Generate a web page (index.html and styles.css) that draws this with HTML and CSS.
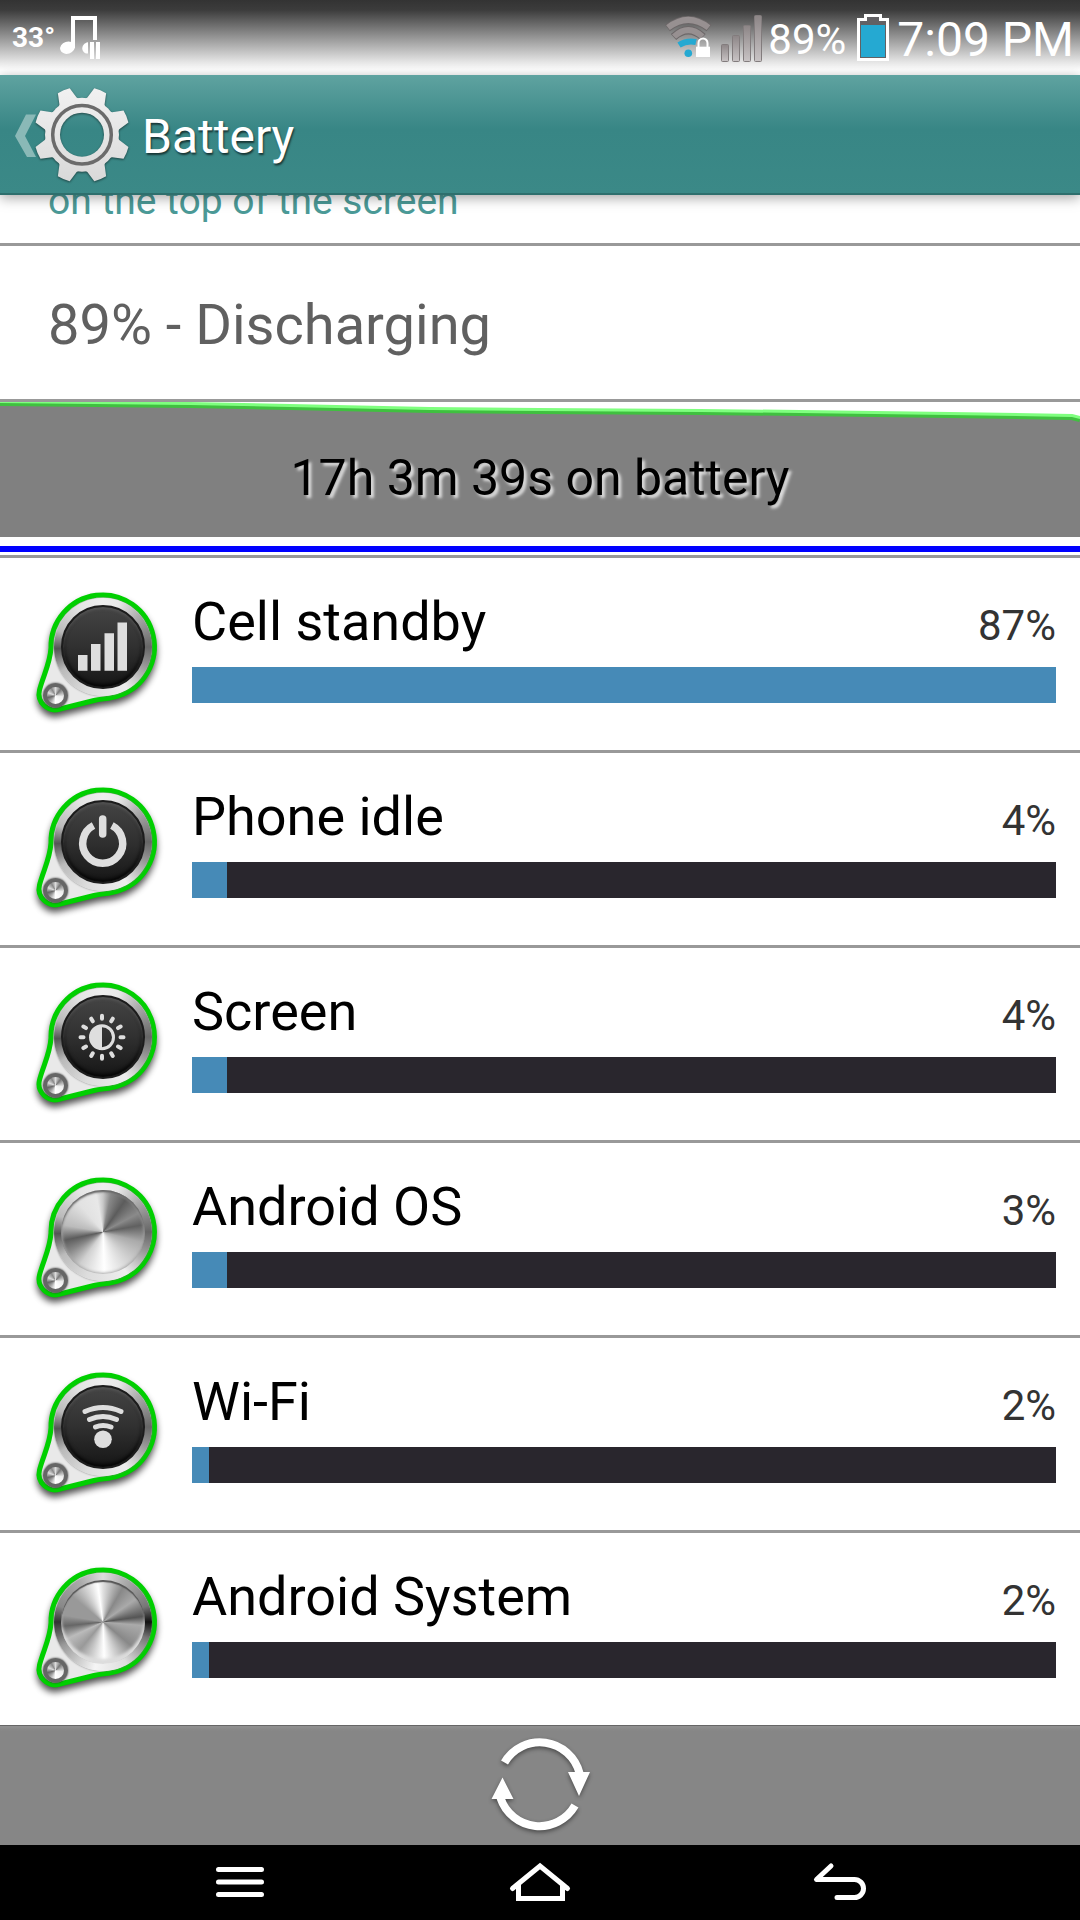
FILE: index.html
```html
<!DOCTYPE html>
<html lang="en">
<head>
  <meta charset="UTF-8">
  <meta name="viewport" content="width=device-width, initial-scale=1.0">
  <title>Battery</title>
  <link rel="stylesheet" href="styles.css">
</head>
<body>

  <!-- shared icon shapes -->
  <svg class="defs" width="0" height="0" aria-hidden="true">
    <defs>
      <filter id="soft" x="-20%" y="-20%" width="140%" height="150%">
        <feGaussianBlur stdDeviation="3.5"/>
      </filter>
      <linearGradient id="gear-fill" x1="0" y1="0" x2="0" y2="1">
        <stop offset="0" stop-color="#f2f2f2"/>
        <stop offset="1" stop-color="#d8d8d8"/>
      </linearGradient>
      <linearGradient id="bar-fill" x1="0" y1="0" x2="0" y2="1">
        <stop offset="0" stop-color="#8c8586"/>
        <stop offset="1" stop-color="#c9c4c5"/>
      </linearGradient>
      <path id="drop" d="M27 66 A51.7 51.7 0 1 1 95 113.7 C86 117 78 116.500 70 118.500 L36 127 A16 16 0 0 1 15.500 108 C19 94 26 82 27 66Z"/>
      <symbol id="shell" viewBox="0 0 144 144">
        <use href="#drop" y="5" fill="#000" stroke="#000" stroke-width="4" opacity=".7" filter="url(#soft)"/>
        <use href="#drop" fill="#e9e9e9" stroke="#00d000" stroke-width="5"/>
      </symbol>
      <path id="tooth" d="M-11 -34 L-9.300 -36.500 L-6.400 -47.600 Q0 -48.600 6.400 -47.600 L9.300 -36.500 L11 -34Z"/>
    </defs>
  </svg>

  <header class="status-bar">
    <span class="temp">33°</span>
    <svg class="icon-music" width="48" height="75" viewBox="0 0 48 75" fill="#fff">
      <path d="M15 48V16H41V40H37V20H19V48Z"/>
      <ellipse cx="11.500" cy="47.700" rx="7.500" ry="6" transform="rotate(-18 11.500 47.700)"/>
      <path d="M32 42.300C28 43 26.300 46 26.300 48.500C26.300 51.500 29 54 32 53.500Z"/>
      <path d="M34 42H38V59H34ZM40 42H44V59H40Z"/>
    </svg>
    <span class="spacer"></span>
    <svg width="52" height="75" viewBox="0 0 52 75" fill="none">
      <g stroke="#6c6768" stroke-width="8">
        <path d="M5.500 28Q26.300 12 47 28"/>
        <path d="M11.500 37Q26.300 23.500 41 37"/>
      </g>
      <g stroke="#979091" stroke-width="6">
        <path d="M6 27.600Q26.300 12 46.500 27.600"/>
        <path d="M12 36.600Q26.300 23.500 40.500 36.600"/>
      </g>
      <path d="M17 45Q25 40 34 42" stroke="#25a9d2" stroke-width="6"/>
      <circle cx="26.300" cy="53.300" r="3.800" fill="#25a9d2"/>
      <path d="M34 46.700H48V57H34Z" fill="#fff"/>
      <path d="M36.500 47V43a4.500 4.500 0 0 1 9 0V47" stroke="#fff" stroke-width="2"/>
    </svg>
    <svg width="48" height="75" viewBox="0 0 48 75" fill="url(#bar-fill)" stroke="#827c7d">
      <rect x="7.500" y="44.500" width="7" height="17" rx="1"/>
      <rect x="18.500" y="35.500" width="7" height="26" rx="1"/>
      <rect x="29.500" y="25.500" width="7" height="36" rx="1"/>
      <rect x="40.500" y="15.500" width="7" height="46" rx="1"/>
    </svg>
    <span class="level">89%</span>
    <svg class="icon-battery" width="32" height="75" viewBox="0 0 32 75">
      <path d="M0 18H7V14H25V18H32V61H0Z" fill="#fff"/>
      <path d="M3 21H10V17H22V21H29V58H3Z" fill="#626164"/>
      <path d="M4 25H28V57H4Z" fill="#25a9d2"/>
    </svg>
    <time class="clock">7:09 PM</time>
  </header>

  <nav class="action-bar">
    <a href="#" class="up" aria-label="Back to settings">
      <svg width="120" height="120" viewBox="0 0 120 120">
        <path d="M14 39.500H24L13 61L24 82H15L3 61Z" fill="#8ab9b7"/>
        <mask id="gear-mask">
          <g transform="translate(70 59.700)" fill="#fff">
            <circle r="37"/>
            <use href="#tooth" transform="rotate(22.500)"/>
            <use href="#tooth" transform="rotate(67.500)"/>
            <use href="#tooth" transform="rotate(112.500)"/>
            <use href="#tooth" transform="rotate(157.500)"/>
            <use href="#tooth" transform="rotate(202.500)"/>
            <use href="#tooth" transform="rotate(247.500)"/>
            <use href="#tooth" transform="rotate(292.500)"/>
            <use href="#tooth" transform="rotate(337.500)"/>
            <circle r="22" fill="#000"/>
          </g>
        </mask>
        <g class="gear">
          <rect x="20" y="10" width="100" height="100" fill="url(#gear-fill)" mask="url(#gear-mask)"/>
        </g>
        <circle cx="70" cy="59.700" r="29.300" fill="none" stroke="#6b6b6b" stroke-width="3.500"/>
      </svg>
    </a>
    <h1 class="title">Battery</h1>
  </nav>

  <main>
    <section class="hint">
      <p>on the top of the screen</p>
    </section>

    <section class="state">89% - Discharging</section>

    <section class="history">
      <div class="chart">
        <svg width="100%" height="135" viewBox="0 0 1080 135" preserveAspectRatio="none">
          <path d="M0 1L190 3L290 5L430 8L540 9L700 10L800 11L950 13L1072 15L1080 17V135H0Z" fill="#808080"/>
          <path d="M0 1L190 3L290 5L430 8L540 9L700 10L800 11L950 13L1072 15L1080 17" fill="none" stroke="#0f0" stroke-opacity=".5" stroke-width="6"/>
        </svg>
        <span class="elapsed">17h 3m 39s on battery</span>
      </div>
      <div class="blue-line"></div>
    </section>

    <ul class="usage">
      <li class="row">
        <div class="app-icon">
          <svg width="144" height="144"><use href="#shell"/></svg>
          <i class="ring"></i><i class="cap dark"></i><i class="screw"></i>
          <svg class="glyph" width="144" height="144" fill="#dedede">
            <path d="M54 73h9.500v15.700H54ZM67 62h9.500v26.700H67ZM80.500 51.300h9.500v37.400h-9.500ZM93.500 40.500h9.500v48.200h-9.500Z"/>
          </svg>
        </div>
        <div class="info">
          <div class="label"><span class="name">Cell standby</span><span class="percent">87%</span></div>
          <div class="bar"><div class="fill" style="width: 100%"></div></div>
        </div>
      </li>
      <li class="row">
        <div class="app-icon">
          <svg width="144" height="144"><use href="#shell"/></svg>
          <i class="ring"></i><i class="cap dark"></i><i class="screw"></i>
          <svg class="glyph" width="144" height="144" fill="none" stroke="#dedede" stroke-width="7.500">
            <path d="M69.500 48.500A20 20 0 1 0 87.900 48.500"/>
            <path d="M78.700 42V57" stroke-linecap="round"/>
          </svg>
        </div>
        <div class="info">
          <div class="label"><span class="name">Phone idle</span><span class="percent">4%</span></div>
          <div class="bar"><div class="fill" style="width: 4%"></div></div>
        </div>
      </li>
      <li class="row">
        <div class="app-icon">
          <svg width="144" height="144"><use href="#shell"/></svg>
          <i class="ring"></i><i class="cap dark"></i><i class="screw"></i>
          <svg class="glyph" width="144" height="144">
            <g transform="translate(78 65.300)" fill="none" stroke="#dedede">
              <circle r="11.500" stroke-width="3"/>
              <path d="M0 -12A12 12 0 0 0 0 12Z" fill="#dedede" stroke="none"/>
              <g stroke-width="4" stroke-linecap="round">
                <path d="M0 -18.500V-21.500M0 18.500V21.500M18.500 0H21.500M-18.500 0H-21.500"/>
                <path d="M0 -18.500V-21.500M0 18.500V21.500M18.500 0H21.500M-18.500 0H-21.500" transform="rotate(30)"/>
                <path d="M0 -18.500V-21.500M0 18.500V21.500M18.500 0H21.500M-18.500 0H-21.500" transform="rotate(60)"/>
              </g>
            </g>
          </svg>
        </div>
        <div class="info">
          <div class="label"><span class="name">Screen</span><span class="percent">4%</span></div>
          <div class="bar"><div class="fill" style="width: 4%"></div></div>
        </div>
      </li>
      <li class="row">
        <div class="app-icon">
          <svg width="144" height="144"><use href="#shell"/></svg>
          <i class="ring"></i><i class="cap steel"></i><i class="screw"></i>
        </div>
        <div class="info">
          <div class="label"><span class="name">Android OS</span><span class="percent">3%</span></div>
          <div class="bar"><div class="fill" style="width: 4%"></div></div>
        </div>
      </li>
      <li class="row">
        <div class="app-icon">
          <svg width="144" height="144"><use href="#shell"/></svg>
          <i class="ring"></i><i class="cap dark"></i><i class="screw"></i>
          <svg class="glyph" width="144" height="144" fill="none" stroke="#dedede" stroke-width="5" stroke-linecap="round">
            <path d="M61 49.500Q79 41.500 97 49.500"/>
            <path d="M65.500 57.500Q79 51.500 92.500 57.500"/>
            <path d="M71.500 65Q79 62 87 65"/>
            <circle cx="79" cy="77.300" r="8.800" fill="#dedede" stroke="none"/>
          </svg>
        </div>
        <div class="info">
          <div class="label"><span class="name">Wi-Fi</span><span class="percent">2%</span></div>
          <div class="bar"><div class="fill" style="width: 2%"></div></div>
        </div>
      </li>
      <li class="row">
        <div class="app-icon">
          <svg width="144" height="144"><use href="#shell"/></svg>
          <i class="ring worn"></i><i class="cap steel worn"></i><i class="screw"></i>
        </div>
        <div class="info">
          <div class="label"><span class="name">Android System</span><span class="percent">2%</span></div>
          <div class="bar"><div class="fill" style="width: 2%"></div></div>
        </div>
      </li>
    </ul>
  </main>

  <div class="tool-bar">
    <button class="refresh" aria-label="Refresh">
      <svg width="96" height="96" viewBox="0 0 96 96">
        <g fill="none" stroke="#fff" stroke-width="8">
          <path d="M12.500 24.500A41 41 0 0 1 87.500 35"/>
          <path d="M83 67.500A41 41 0 0 1 8.500 60"/>
        </g>
        <path d="M76 34H98L87 58ZM-0.500 61H21.500L10.500 39.500Z" fill="#fff"/>
      </svg>
    </button>
  </div>

  <footer class="nav-bar">
    <button aria-label="Menu">
      <svg width="72" height="75" viewBox="0 0 72 75"><path d="M14.500 24.500H57.500M14.500 37H57.500M14.500 49.500H57.500"/></svg>
    </button>
    <button aria-label="Home">
      <svg width="72" height="75" viewBox="0 0 72 75"><path d="M8.500 43.500L36 21L63.500 43.500M14.500 40V53.500H58.500V40" stroke-linejoin="miter"/></svg>
    </button>
    <button aria-label="Back">
      <svg width="72" height="75" viewBox="0 0 72 75"><path d="M27 21L12.500 34.500H50.500a9 9 0 0 1 0 18H33"/></svg>
    </button>
  </footer>

</body>
</html>
```
FILE: styles.css
```css
* {
  box-sizing: border-box;
}
body {
  margin: 0;
  min-height: 100vh;
  display: flex;
  flex-direction: column;
  background: #fff;
  color: #000;
  font-family: Roboto, "Noto Sans", sans-serif;
}
svg {
  display: block;
  flex-shrink: 0;
}
.defs {
  position: absolute;
}
button {
  border: none;
  background: none;
  padding: 0;
  cursor: pointer;
}
h1, p, ul {
  margin: 0;
  padding: 0;
}

/* status bar */
.status-bar {
  display: flex;
  height: 75px;
  padding: 0 6px 0 12px;
  background: linear-gradient(#333 0, #3c3c3c 10px, #fff 70px);
  color: #fff;
  line-height: 79px;
}
.temp {
  width: 44px;
  font-weight: bold;
  font-size: 28px;
  line-height: 75px;
  white-space: nowrap;
}
.spacer {
  flex: 1;
}
.level {
  margin-left: 6px;
  font-size: 42px;
}
.icon-battery {
  margin: 0 8px 0 11px;
}
.clock {
  font-size: 48px;
}

/* action bar */
.action-bar {
  position: relative;
  z-index: 1;
  display: flex;
  align-items: center;
  height: 120px;
  padding: 0 12px;
  background: linear-gradient(#5fa3a0, #388685 45%, #3b8987);
  box-shadow: inset 0 -2px #2e6f6d, 0 3px 12px rgba(0, 0, 0, 0.35);
}
.up {
  margin-right: 10px;
}
.gear {
  filter: drop-shadow(0 1px 1px rgba(0, 0, 0, 0.5));
}
.title {
  color: #fff;
  font-size: 48px;
  font-weight: normal;
  line-height: 56px;
  padding-top: 4px;
  text-shadow: 1px 2px 2px rgba(0, 0, 0, 0.6);
}

/* top sections */
main {
  flex: 1;
}
/* scrolled partly under the action bar */
.hint {
  display: flex;
  align-items: flex-end;
  height: 51px;
  padding: 0 48px 18px;
  border-bottom: 3px solid #999;
  color: #4b9a97;
  font-size: 39px;
  line-height: 48px;
}
.state {
  display: flex;
  align-items: center;
  height: 156px;
  padding: 4px 48px 0;
  border-bottom: 3px solid #999;
  color: #606060;
  font-size: 56px;
}
.history {
  height: 156px;
  border-bottom: 3px solid #999;
}
.chart {
  position: relative;
}
.elapsed {
  position: absolute;
  inset: 0;
  padding-top: 16px;
  text-align: center;
  font-size: 50px;
  line-height: 120px;
  text-shadow: 3px 3px 3px #ddd;
}
.blue-line {
  height: 6px;
  margin-top: 9px;
  background: #00f;
}

/* usage list */
.usage {
  list-style: none;
}
.row {
  display: flex;
  align-items: flex-start;
  gap: 24px;
  padding: 24px;
  border-bottom: 3px solid #999;
}
.row:last-child {
  border-bottom: none;
}
.info {
  flex: 1;
  padding-top: 8px;
}
.label {
  display: flex;
  justify-content: space-between;
  align-items: baseline;
  line-height: 64px;
}
.name {
  font-size: 54px;
}
.percent {
  color: #333;
  font-size: 42px;
}
.bar {
  height: 36px;
  margin-top: 9px;
  background: #29262d;
}
.fill {
  height: 100%;
  background: #468ab7;
}

/* metal badge, layers stacked over the green shell */
.app-icon {
  position: relative;
  width: 144px;
  height: 144px;
}
.app-icon i,
.glyph {
  position: absolute;
  border-radius: 50%;
}
.glyph {
  top: 0;
  left: 0;
}
.app-icon .ring {
  left: 30px;
  top: 16px;
  width: 98px;
  height: 98px;
  background: conic-gradient(#eee 0, #e8e8e8 20deg, #aaa 50deg, #666 90deg, #999 115deg, #eee 150deg, #ddd 200deg, #bbb 240deg, #555 268deg, #bbb 290deg, #e5e5e5 330deg, #eee);
  box-shadow: 0 0 2px #777;
}
.app-icon .ring.worn {
  background: conic-gradient(#ddd 0, #aaa 30deg, #777 70deg, #111 90deg, #777 110deg, #ddd 150deg, #f5f5f5 190deg, #999 240deg, #333 270deg, #888 290deg, #aaa 330deg, #ddd);
}
.app-icon .cap {
  left: 37px;
  top: 23px;
  width: 84px;
  height: 84px;
}
.cap.dark {
  background: linear-gradient(#444, #303030 50%, #161616);
  border: 2px solid #1c1c1c;
  box-shadow: inset 0 2px 3px #555, inset 0 -2px 4px #000;
}
.cap.steel {
  background: conic-gradient(#c8c8c8 0, #888 12deg, #5c5c5c 35deg, #8a8a8a 62deg, #606060 80deg, #aaa 105deg, #d4d4d4 140deg, #fff 178deg, #d0d0d0 215deg, #888 240deg, #5c5c5c 258deg, #bbb 280deg, #e2e2e2 320deg, #e8e8e8 350deg, #c8c8c8);
  box-shadow: inset 0 2px 2px #666, inset 0 0 3px 1px #aaa;
}
.cap.steel.worn {
  background: conic-gradient(#e0e0e0 0, #888 30deg, #aaa 55deg, #555 82deg, #aaa 95deg, #888 130deg, #fff 178deg, #999 220deg, #bbb 245deg, #666 264deg, #999 280deg, #999 310deg, #fff 352deg, #e0e0e0);
  box-shadow: inset 0 2px 1px #555, inset 0 -5px 3px #ddd;
}
.app-icon .screw {
  left: 19px;
  top: 101px;
  width: 25px;
  height: 25px;
  border: 4px solid #666;
  background: conic-gradient(#ddd, #777 40deg, #eee 100deg, #fff 180deg, #aaa 220deg, #666 255deg, #ddd 290deg, #888 330deg, #ddd);
  box-shadow: 0 0 2px #333;
}

/* bottom bars */
.tool-bar {
  display: flex;
  justify-content: center;
  align-items: center;
  height: 120px;
  border-top: 1px solid #666;
  background: linear-gradient(#919191, #868686 5px);
}
.refresh svg {
  overflow: visible;
  filter: drop-shadow(0 2px 2px rgba(0, 0, 0, 0.45));
}
.nav-bar {
  display: grid;
  grid-template-columns: repeat(3, 1fr);
  justify-items: center;
  height: 75px;
  padding: 0 90px;
  background: #000;
}
.nav-bar svg {
  fill: none;
  stroke: #fff;
  stroke-width: 5;
  stroke-linecap: round;
  stroke-linejoin: round;
}
```
